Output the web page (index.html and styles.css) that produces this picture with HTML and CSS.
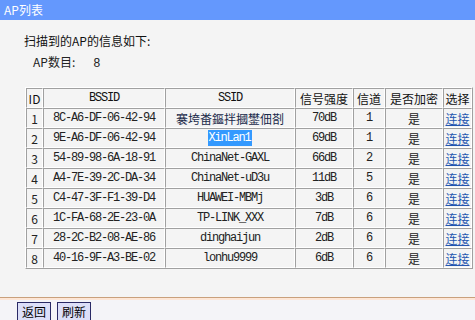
FILE: index.html
```html
<!DOCTYPE html>
<html lang="zh-CN">
<head>
<meta charset="utf-8">
<title>AP列表</title>
<link rel="stylesheet" href="styles.css">
</head>
<body>
<div class="titlebar">AP列表</div>
<div class="content">
  <p class="intro">扫描到的AP的信息如下:</p>
  <p class="count"><span>AP数目:</span><span class="num">8</span></p>
  <table class="ap">
    <tr class="head">
      <td class="c-id">ID</td>
      <td class="c-bssid mono">BSSID</td>
      <td class="c-ssid mono">SSID</td>
      <td class="c-sig">信号强度</td>
      <td class="c-ch">信道</td>
      <td class="c-enc">是否加密</td>
      <td class="c-sel">选择</td>
    </tr>
    <tr><td>1</td><td class="mono">8C-A6-DF-06-42-94</td><td class="cjk">褰垮畨鏂拌摑鐢佃剳</td><td class="mono">70dB</td><td class="mono">1</td><td>是</td><td><a href="#">连接</a></td></tr>
    <tr><td>2</td><td class="mono">9E-A6-DF-06-42-94</td><td class="mono"><span class="sel">XinLan1</span></td><td class="mono">69dB</td><td class="mono">1</td><td>是</td><td><a href="#">连接</a></td></tr>
    <tr><td>3</td><td class="mono">54-89-98-6A-18-91</td><td class="mono">ChinaNet-GAXL</td><td class="mono">66dB</td><td class="mono">2</td><td>是</td><td><a href="#">连接</a></td></tr>
    <tr><td>4</td><td class="mono">A4-7E-39-2C-DA-34</td><td class="mono">ChinaNet-uD3u</td><td class="mono">11dB</td><td class="mono">5</td><td>是</td><td><a href="#">连接</a></td></tr>
    <tr><td>5</td><td class="mono">C4-47-3F-F1-39-D4</td><td class="mono">HUAWEI-MBMj</td><td class="mono">3dB</td><td class="mono">6</td><td>是</td><td><a href="#">连接</a></td></tr>
    <tr><td>6</td><td class="mono">1C-FA-68-2E-23-0A</td><td class="mono">TP-LINK_XXX</td><td class="mono">7dB</td><td class="mono">6</td><td>是</td><td><a href="#">连接</a></td></tr>
    <tr><td>7</td><td class="mono">28-2C-B2-08-AE-86</td><td class="mono">dinghaijun</td><td class="mono">2dB</td><td class="mono">6</td><td>是</td><td><a href="#">连接</a></td></tr>
    <tr><td>8</td><td class="mono">40-16-9F-A3-BE-02</td><td class="mono">lonhu9999</td><td class="mono">6dB</td><td class="mono">6</td><td>是</td><td><a href="#">连接</a></td></tr>
  </table>
</div>
<div class="footer">
  <div class="stripe"></div>
  <div class="buttons">
    <button class="btn">返回</button>
    <button class="btn">刷新</button>
  </div>
</div>
</body>
</html>
```

FILE: styles.css
```css
html, body {
  margin: 0;
  padding: 0;
  width: 475px;
  height: 320px;
  overflow: hidden;
  background: #f4f4f4;
  font-family: "Noto Sans CJK SC", "Liberation Sans", sans-serif;
  font-size: 12px;
  color: #000;
}

.titlebar {
  height: 20px;
  line-height: 19px;
  background: #6498fd;
  color: #fff;
  padding-left: 4px;
  font-size: 12px;
}

.content {
  height: 277px;
  padding-top: 14px;
  box-sizing: border-box;
}

.intro {
  margin: 0 0 7px 24px;
  line-height: 14px;
  color: #111;
}

.count {
  margin: 0 0 16px 33px;
  line-height: 14px;
  color: #222;
}

.count .num {
  margin-left: 18px;
  font-family: "Liberation Mono", monospace;
}

.ap {
  margin-left: 25px;
  border-collapse: separate;
  border-spacing: 0;
  table-layout: fixed;
  width: 448px;
  border: 1px solid;
  border-color: #ffffff #a0a0a0 #a0a0a0 #ffffff;
}

.ap td {
  box-sizing: border-box;
  height: 20px;
  padding: 0;
  border: 1px solid;
  border-color: #a0a0a0 #ffffff #ffffff #a0a0a0;
  text-align: center;
  line-height: 17px;
  color: #222;
  white-space: nowrap;
  overflow: hidden;
}

.ap .head td {
  color: #111;
}

.c-id { width: 17px; }
.c-bssid { width: 122px; }
.c-ssid { width: 130px; }
.c-sig { width: 58px; }
.c-ch { width: 32px; }
.c-enc { width: 58px; }
.c-sel { width: 29px; }

.ap td.mono {
  font-family: "Liberation Mono", monospace;
  font-size: 12px;
  letter-spacing: -1.2px;
}

.ap td.cjk {
  font-size: 12px;
  color: #1a2a4a;
}

.sel {
  background: #3399ff;
  color: #fff;
  padding: 1px 1px 1px 0;
}

.ap a {
  color: #2556b0;
  text-decoration: underline;
}

.footer {
  border-top: 1px solid #c9a07c;
  background: #f4f4f8;
  height: 23px;
}

.stripe {
  height: 2px;
  background: #fde6d6;
}

.buttons {
  display: flex;
  gap: 6px;
  padding: 2px 0 0 17px;
}

.btn {
  width: 34px;
  height: 20px;
  padding: 0;
  margin: 0;
  border: 1px solid #2a2a66;
  background: #dcdff8;
  font-family: "Noto Sans CJK SC", sans-serif;
  font-size: 12px;
  line-height: 16px;
  color: #000;
}
```
